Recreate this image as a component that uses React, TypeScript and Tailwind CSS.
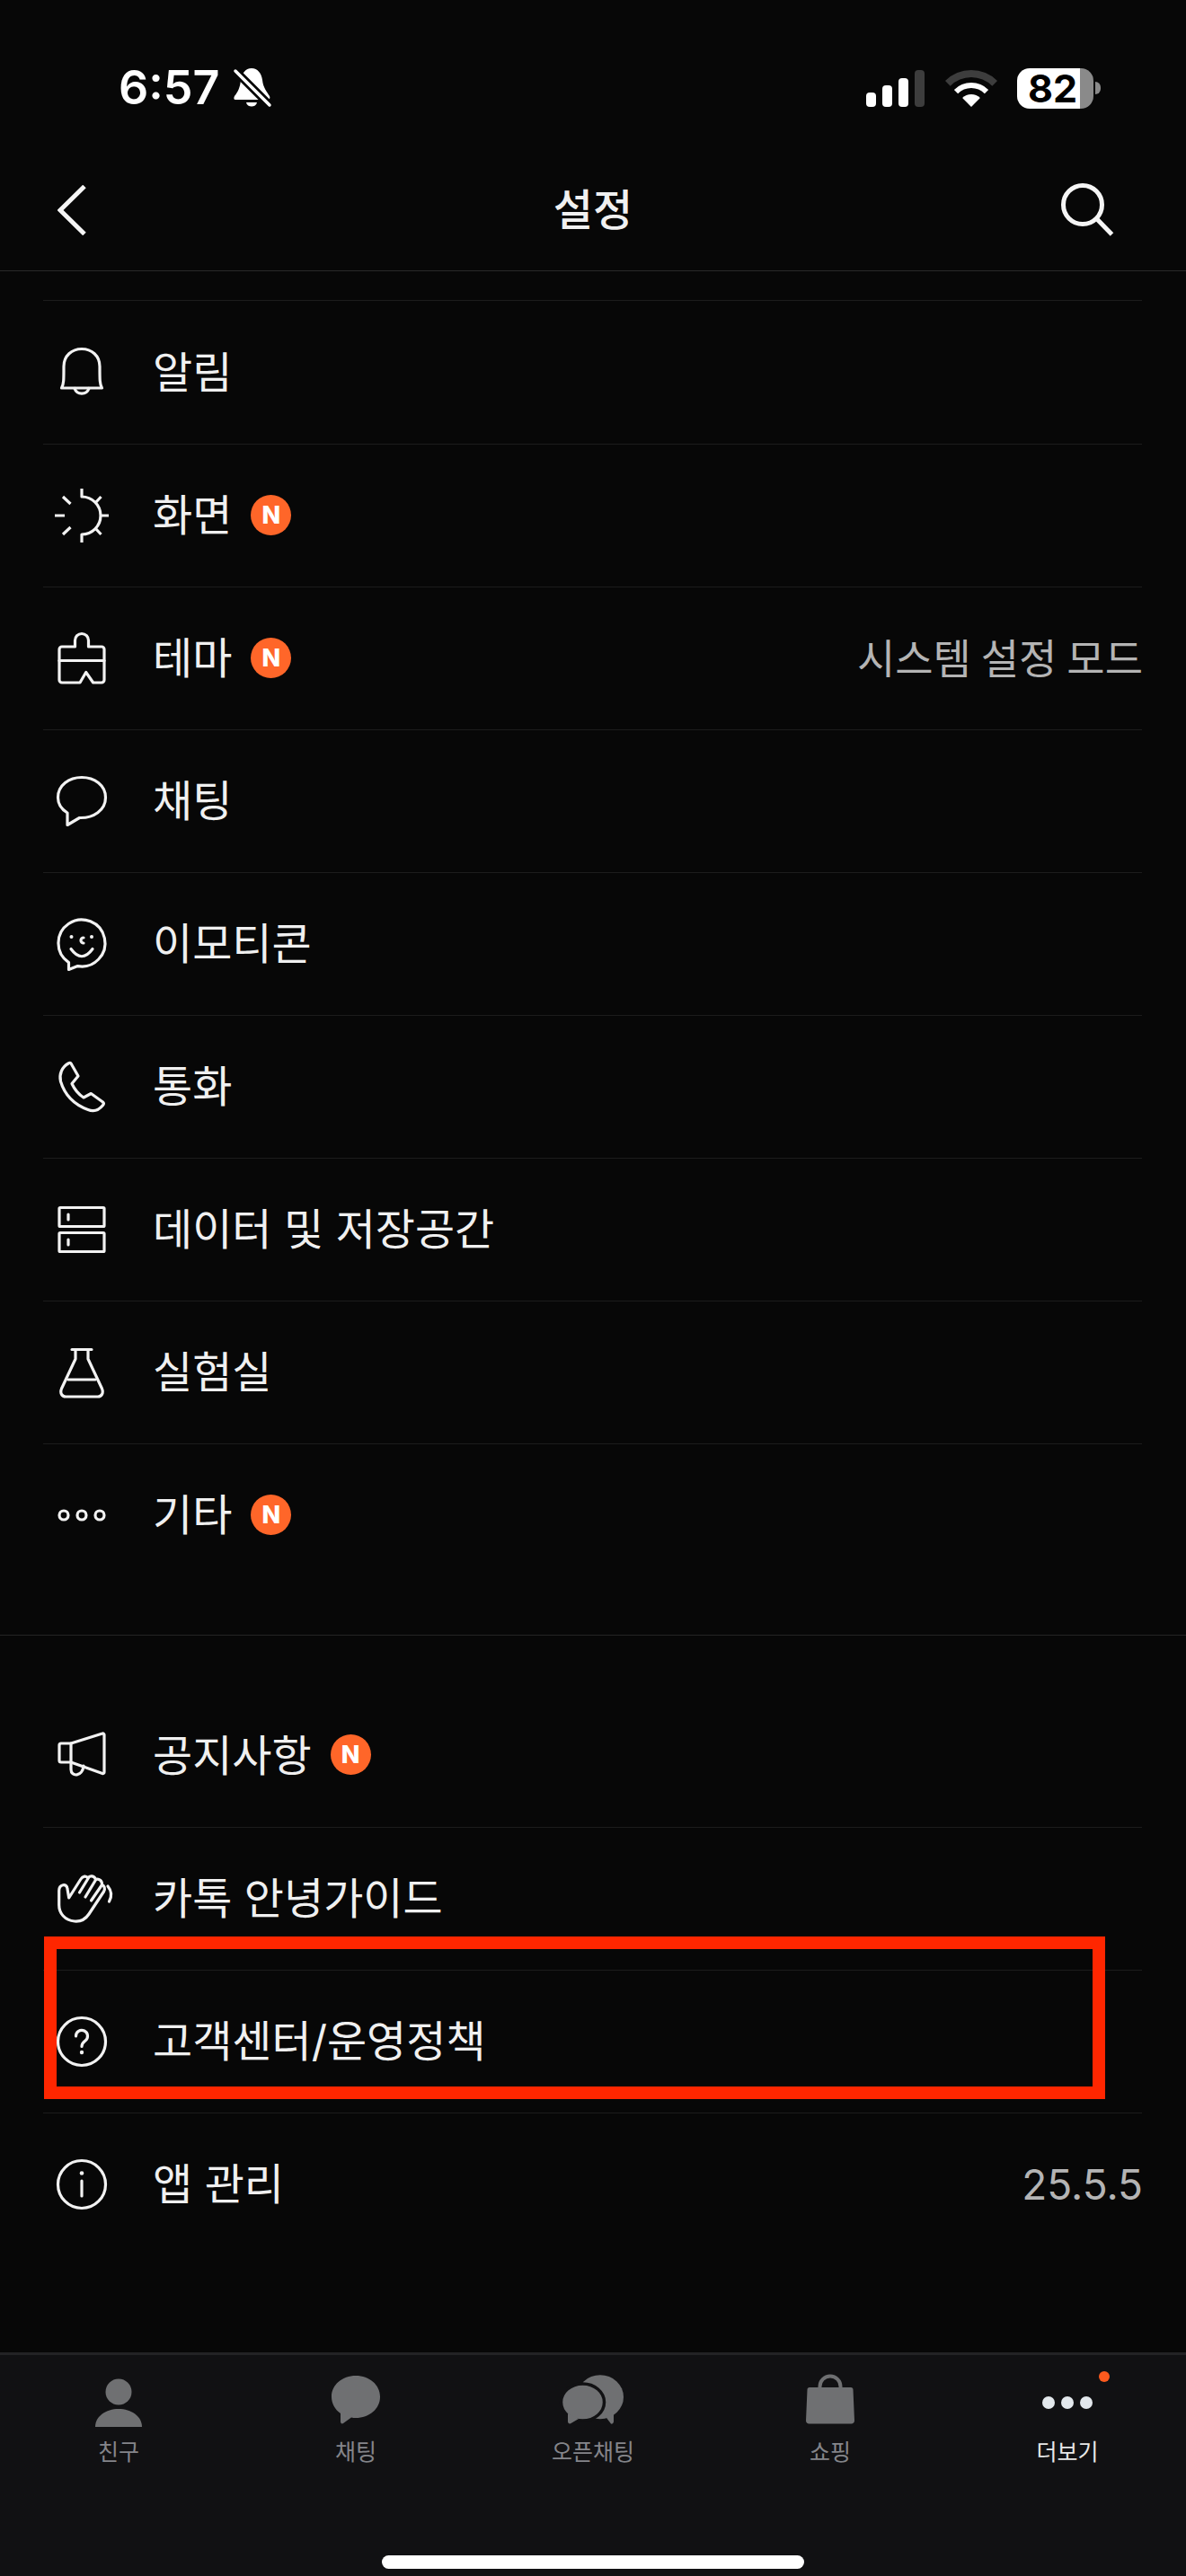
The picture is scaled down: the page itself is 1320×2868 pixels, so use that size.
import React from "react";

type RowProps = {
    icon: React.ReactNode;
    label: string;
    badge?: boolean;
    value?: string;
    first?: boolean;
};

// Shared wrapper for the outlined row icons
const LineIcon = ({ children }: { children: React.ReactNode }) => (
    <svg
        viewBox="0 0 64 64"
        fill="none"
        stroke="#f2f2f2"
        strokeWidth="3.2"
        strokeLinecap="round"
        strokeLinejoin="round"
        className="w-[64px] h-[64px] shrink-0 overflow-visible"
    >
        {children}
    </svg>
);

const BellIcon = () => (
    <LineIcon>
        <path d="M9.5 49 C12 45 12 40 12 25 C12 13 21 5.5 32 5.5 C43 5.5 52 13 52 25 C52 40 52 45 54.5 49 Z" />
        <path d="M24 49.5 A8.5 8.5 0 0 0 40 49.5" />
    </LineIcon>
);

const SunIcon = () => (
    <LineIcon>
        <path d="M32 2 V11 A21 21 0 0 1 32 53 V62" strokeLinecap="butt" />
        <path d="M47 18 L53.5 11 M47 46 L53.5 53 M52 32 H62 M2 32 H13 M11 11 L19.5 19 M11 53 L19.5 45" strokeLinecap="butt" />
    </LineIcon>
);

const BrushIcon = () => (
    <LineIcon>
        <path d="M24.5 19 V12 a7.5 7.5 0 0 1 15 0 V19 H54 a3 3 0 0 1 3 3 V56 a3 3 0 0 1 -3 3 H44.7 L36.7 47.5 L30 59 H10 a3 3 0 0 1 -3 -3 V22 a3 3 0 0 1 3 -3 Z" />
        <path d="M7 34.5 H57" />
    </LineIcon>
);

const ChatIcon = () => (
    <LineIcon>
        <path d="M29.5 50.5 C45 51 58.5 42 58.5 28 C58.5 14 46 5.5 32 5.5 C18 5.5 5.5 14 5.5 28 C5.5 35 9.5 41 16 45 L16 58.5 Z" />
    </LineIcon>
);

const EmoticonIcon = () => (
    <LineIcon>
        <path d="M27.5 56.6 A26 26 0 1 0 17.5 52.6 L17.5 60.5 Z" />
        <circle cx="20.5" cy="24" r="2" fill="#f2f2f2" stroke="none" />
        <circle cx="43" cy="24" r="2" fill="#f2f2f2" stroke="none" />
        <path d="M34 25 a3 3 0 0 0 0 6" />
        <path d="M20 37.5 Q32 54 44 37.5" />
    </LineIcon>
);

const PhoneIcon = () => (
    <LineIcon>
        <path d="M20 6 L28 20 L21 28.5 C24 35 28 40 34 44 L42.3 39.5 L55.5 49 C56.5 50 56.5 51.5 55.5 52.5 C51 58 45 60 39 57.5 C24 52 13 41 8.5 26 C6.5 18 10 10 17 6 C18 5.4 19.5 5.4 20 6 Z" />
    </LineIcon>
);

const StorageIcon = () => (
    <LineIcon>
        <rect x="7" y="7.5" width="50" height="21" rx="1" />
        <rect x="7" y="35.5" width="50" height="21" rx="1" />
        <path d="M17 15 V21 M17 43 V49" />
    </LineIcon>
);

const FlaskIcon = () => (
    <LineIcon>
        <path d="M21 6.5 H43 M25 6.5 V17 L9.5 50 C7.5 55 10 59 14 59 H50 C54 59 56.5 55 54.5 50 L39 17 V6.5" />
        <path d="M17 40 H47" />
    </LineIcon>
);

const MoreIcon = () => (
    <LineIcon>
        <circle cx="12" cy="32" r="5" />
        <circle cx="32" cy="32" r="5" />
        <circle cx="52" cy="32" r="5" />
    </LineIcon>
);

const MegaphoneIcon = () => (
    <LineIcon>
        <path d="M20 18 H9 a2 2 0 0 0 -2 2 V37 a2 2 0 0 0 2 2 H20 Z" />
        <path d="M20 18 L55 7 a1.5 1.5 0 0 1 2 1.5 V50 a1.5 1.5 0 0 1 -2 1.5 L20 39" />
        <path d="M20 39 V47 C20 56 33 55 34 43" />
    </LineIcon>
);

const WaveIcon = () => (
    <LineIcon>
        <path d="M17.7 31 L31 10 C33 6.5 37 6 39 9 C41 5.5 46 6.5 47.5 10.5 C51 9 55 12 54.5 16.5 C57 17 58.5 21 56.5 24 L40 49 C36 55 30 57.5 24 57 C13 56 6.7 48 6.7 39 V23 C6.7 16 15.5 14 16 21 Z" />
        <path d="M29.5 25 L39 9.5 M36 30 L47.5 11 M42.5 34 L54.5 16.5" />
        <path d="M61 18 Q67.5 26 62.5 35" />
    </LineIcon>
);

const HelpIcon = () => (
    <LineIcon>
        <circle cx="32" cy="32" r="26.5" />
        <path d="M25.5 26 a6.5 6.5 0 1 1 10.5 5 c-2.5 2 -4 3 -4 6.5" />
        <circle cx="32" cy="44" r="2.2" fill="#f2f2f2" stroke="none" />
    </LineIcon>
);

const InfoIcon = () => (
    <LineIcon>
        <circle cx="32" cy="32" r="26.5" />
        <circle cx="32" cy="19.5" r="2.3" fill="#f2f2f2" stroke="none" />
        <path d="M32 28 V45" />
    </LineIcon>
);

const NewBadge = () => (
    <span className="mb-[2px] ml-[21px] flex h-[45px] w-[45px] items-center justify-center rounded-full bg-[#ff6629] text-[27px] font-extrabold leading-none text-white">
        N
    </span>
);

const SettingRow = ({ icon, label, badge, value, first }: RowProps) => (
    <div className={first ? "flex h-[159px] items-center pl-[11px]" : "flex h-[159px] items-center border-t border-[#1c1c1c] pl-[11px]"}>
        {icon}
        <span className="ml-[47px] text-[48px] leading-none text-[#f0f0f0]">{label}</span>
        {badge && <NewBadge />}
        {value && <span className="-mr-[1px] ml-auto text-[46px] leading-none text-[#b4b4b4] [word-spacing:-2px]">{value}</span>}
    </div>
);

// Status bar glyphs
const MutedBell = () => (
    <svg viewBox="0 0 42 44" className="ml-[15px] h-[44px] w-[42px] overflow-visible">
        <path fill="#fff" d="M20 0 C27 0 31 6 32 13 C33 22 37 26 40 31 C41 33 40 35 38 35 H2 C0 35 0 33 1 31 C5 26 7 22 8 13 C9 6 13 0 20 0 Z" />
        <path fill="#fff" d="M14 38 H26 C25 44 15 44 14 38 Z" />
        <path d="M2 3 L40 41" stroke="#070707" strokeWidth="9" />
        <path d="M2 3 L40 41" stroke="#fff" strokeWidth="3.5" strokeLinecap="round" />
    </svg>
);

const WifiIcon = () => (
    <svg viewBox="0 0 58 43" className="h-[43px] w-[58px]">
        <path fill="#3d3d3d" d="M0 13 A41 41 0 0 1 58 13 L52.3 18.7 A33 33 0 0 0 5.7 18.7 Z" />
        <path fill="#fff" d="M9.9 22.9 A27 27 0 0 1 48.1 22.9 L43.85 27.15 A21 21 0 0 0 14.15 27.15 Z" />
        <path fill="#fff" d="M19.1 32.1 A14 14 0 0 1 38.9 32.1 L29 42 Z" />
    </svg>
);

const StatusBar = () => (
    <div className="flex h-[167px] items-start justify-between pl-[132px] pr-[95px] pt-[71px]">
        <div className="flex h-[54px] items-center">
            <span className="text-[52px] font-semibold leading-none text-white">6:57</span>
            <MutedBell />
        </div>
        <div className="flex h-[54px] items-center">
            <div className="flex items-end gap-[7px]">
                <div className="h-[16px] w-[11px] rounded-[4px] bg-white" />
                <div className="h-[24px] w-[11px] rounded-[4px] bg-white" />
                <div className="h-[32px] w-[11px] rounded-[4px] bg-white" />
                <div className="h-[41px] w-[11px] rounded-[4px] bg-[#3d3d3d]" />
            </div>
            <div className="ml-[23px]"><WifiIcon /></div>
            <div className="ml-[22px] flex items-center">
                <div className="flex h-[45px] w-[70px] items-center justify-end rounded-l-[14px] bg-white pr-[3px]">
                    <span className="text-[43px] font-bold leading-none text-black">82</span>
                </div>
                <div className="h-[45px] w-[15px] rounded-r-[14px] bg-[#8a8a8a]" />
                <div className="ml-[2px] h-[14px] w-[6px] rounded-r-full bg-[#8a8a8a]" />
            </div>
        </div>
    </div>
);

const NavBar = () => (
    <div className="grid h-[135px] grid-cols-[1fr_auto_1fr] items-center border-b border-[#2a2a2a] px-[64px]">
        <svg viewBox="0 0 32 56" fill="none" stroke="#f5f5f5" strokeWidth="5" className="h-[56px] w-[32px]">
            <path d="M30 1.5 L3 28 L30 54.5" />
        </svg>
        <span className="text-[48px] font-medium leading-none text-[#f0f0f0]">설정</span>
        <svg viewBox="0 0 60 60" fill="none" stroke="#f5f5f5" strokeWidth="5" className="mr-[16px] h-[60px] w-[60px] justify-self-end">
            <circle cx="25" cy="24" r="21.5" />
            <path d="M41 40 L57.5 57" />
        </svg>
    </div>
);

type TabProps = {
    label: string;
    active?: boolean;
    dot?: boolean;
    children: React.ReactNode;
};

const Tab = ({ label, active, dot, children }: TabProps) => (
    <div className="relative flex flex-col items-center">
        {children}
        {dot && <span className="absolute left-[167px] top-[-3px] h-[12px] w-[12px] rounded-full bg-[#fc5a1e]" />}
        <span className={active ? "mt-[8px] text-[25px] leading-[30px] text-[#e8e8e8]" : "mt-[8px] text-[25px] leading-[30px] text-[#84858a]"}>
            {label}
        </span>
    </div>
);

const TabBar = () => (
    <div className="mt-auto flex h-[249px] flex-col border-t-[3px] border-[#232325] bg-[#111113] pt-[21px]">
        <div className="grid grid-cols-5">
            <Tab label="친구">
                <svg viewBox="0 0 64 64" fill="#6f7072" className="h-[64px] w-[64px]">
                    <circle cx="32" cy="20" r="14.5" />
                    <path d="M6 59 C6 47 18 39 32 39 C46 39 58 47 58 59 Z" />
                </svg>
            </Tab>
            <Tab label="채팅">
                <svg viewBox="0 0 64 64" fill="#6f7072" className="h-[64px] w-[64px]">
                    <path d="M5 25.5 C5 12 17 2 32 2 C47 2 59 12 59 25.5 C59 39 47 49 32 49 C30 49 29 49 27 48.5 L18 55 C16.5 56 15 55 15 53 V44 C9 40 5 33 5 25.5 Z" />
                </svg>
            </Tab>
            <Tab label="오픈채팅">
                <svg viewBox="0 0 80 64" className="h-[64px] w-[80px]">
                    <ellipse cx="48" cy="25.7" rx="26" ry="24.5" fill="#6f7072" />
                    <path fill="#6f7072" d="M52 45 L60 55.5 C61 56 63 55 63 53 V40 Z" />
                    <g fill="#6f7072" stroke="#111113" strokeWidth="3.5">
                        <ellipse cx="28.5" cy="31.5" rx="24" ry="20.5" />
                    </g>
                    <path fill="#6f7072" d="M12 44 L12 53 C12 55 14 56 15.5 55 L24 50 Z" />
                </svg>
            </Tab>
            <Tab label="쇼핑">
                <svg viewBox="0 0 64 64" fill="#6f7072" className="h-[64px] w-[64px]">
                    <path d="M9 15 H55 C56.5 15 57.5 16 57.5 17.5 L59 52 C59 54 57.5 55.5 55.5 55.5 H8.5 C6.5 55.5 5 54 5 52 L6.5 17.5 C6.5 16 7.5 15 9 15 Z" />
                    <path d="M20.5 17 V14 a11.5 11.5 0 0 1 23 0 V17" fill="none" stroke="#6f7072" strokeWidth="4" />
                </svg>
            </Tab>
            <Tab label="더보기" active dot>
                <svg viewBox="0 0 64 64" fill="#e3e8ec" className="h-[64px] w-[64px]">
                    <circle cx="11" cy="32" r="7" />
                    <circle cx="32" cy="32" r="7" />
                    <circle cx="53" cy="32" r="7" />
                </svg>
            </Tab>
        </div>
        <div className="mx-auto mt-[100px] h-[15px] w-[470px] rounded-full bg-white" />
    </div>
);

const App: React.FC = () => {
    return (
        <main className="relative flex h-[2868px] w-[1320px] flex-col overflow-hidden bg-[#070707] font-['Inter','Noto_Sans_CJK_KR',sans-serif]">
            <StatusBar />
            <NavBar />

            <section className="ml-[48px] mr-[49px] mt-[32px] border-t border-[#1c1c1c] pb-[54px]">
                <SettingRow first icon={<BellIcon />} label="알림" />
                <SettingRow icon={<SunIcon />} label="화면" badge />
                <SettingRow icon={<BrushIcon />} label="테마" badge value="시스템 설정 모드" />
                <SettingRow icon={<ChatIcon />} label="채팅" />
                <SettingRow icon={<EmoticonIcon />} label="이모티콘" />
                <SettingRow icon={<PhoneIcon />} label="통화" />
                <SettingRow icon={<StorageIcon />} label="데이터 및 저장공간" />
                <SettingRow icon={<FlaskIcon />} label="실험실" />
                <SettingRow icon={<MoreIcon />} label="기타" badge />
            </section>

            <div className="h-px bg-[#242424]" />

            <section className="ml-[48px] mr-[49px] mt-[54px]">
                <SettingRow first icon={<MegaphoneIcon />} label="공지사항" badge />
                <SettingRow icon={<WaveIcon />} label="카톡 안녕가이드" />
                <SettingRow icon={<HelpIcon />} label="고객센터/운영정책" />
                <SettingRow icon={<InfoIcon />} label="앱 관리" value="25.5.5" />
            </section>

            <TabBar />

            {/* red highlight drawn over the support row */}
            <div className="absolute left-[49px] top-[2156px] h-[181px] w-[1181px] border-[14px] border-[#ff2600]" />
        </main>
    );
};

export default App;
